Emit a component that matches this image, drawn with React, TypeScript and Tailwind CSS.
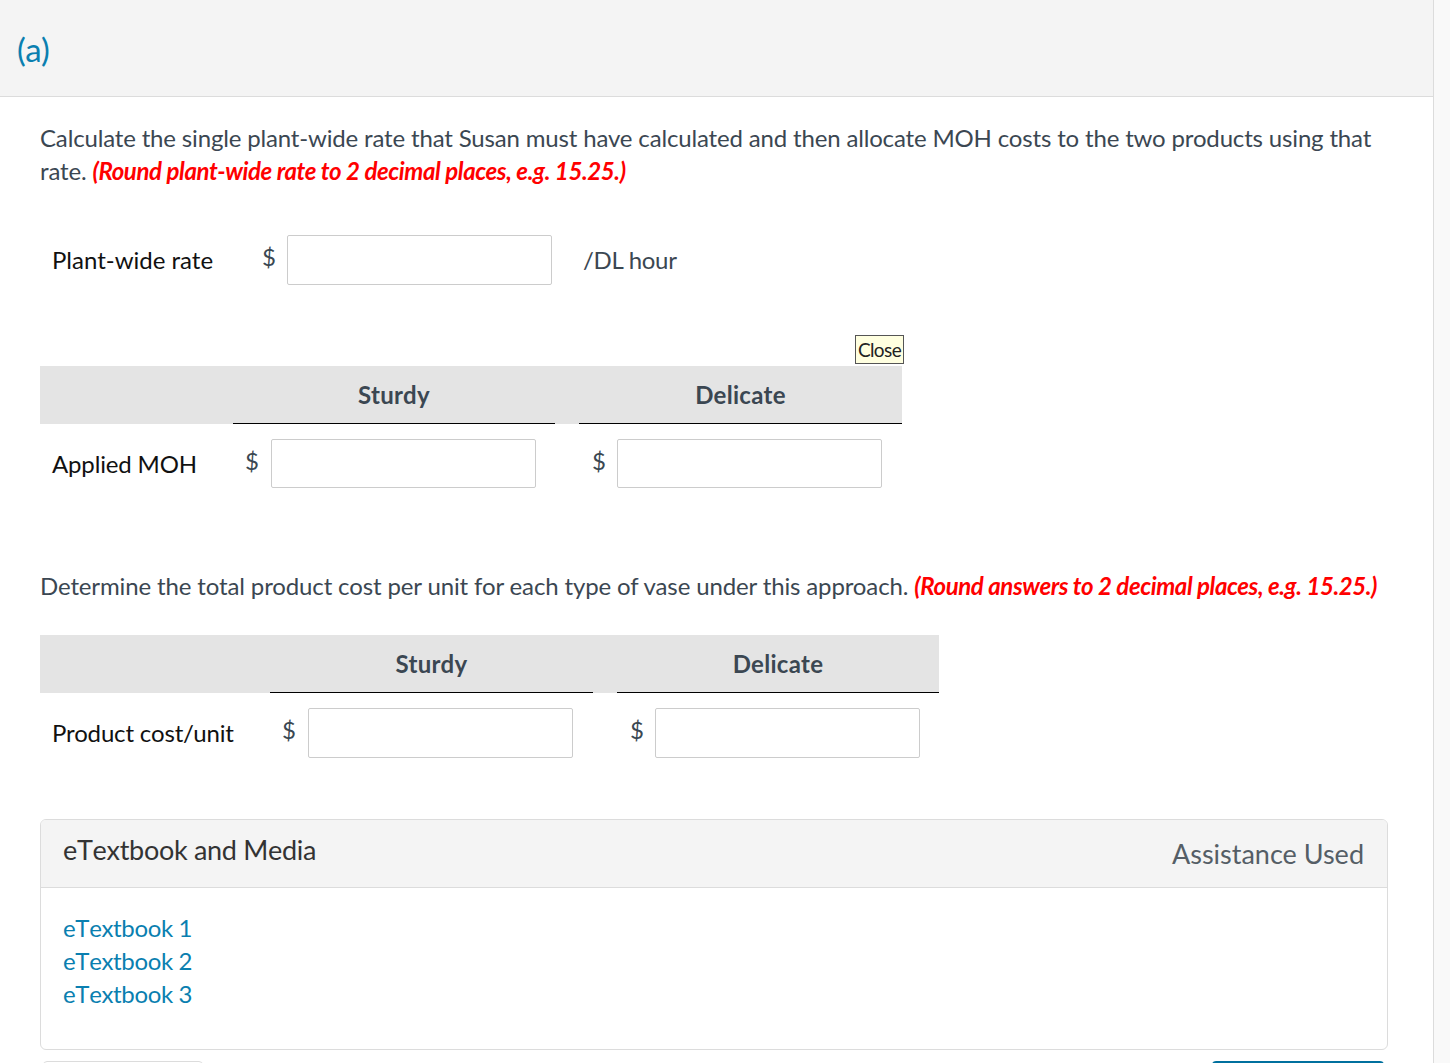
const Field = ({ height }: { height: string }) => (
  <div className={`w-[265px] ${height} bg-white border border-[#ccc] rounded-[2px] shrink-0`}></div>
);

interface CostTableProps {
  label: string;
  labelWidth: string;
  firstWidth: string;
  secondWidth: string;
  gapWidth: string;
  gapPad: string;
  fieldHeight: string;
}

function CostTable({ label, labelWidth, firstWidth, secondWidth, gapWidth, gapPad, fieldHeight }: CostTableProps) {
  return (
    <div className="w-fit">
      <div className="flex h-[58px] bg-[#e4e4e4] items-stretch">
        <div className={labelWidth}></div>
        <div className={`${firstWidth} border-b border-black flex items-center justify-center font-bold text-[#3b4752] text-[24px] tracking-[0.3px]`}>Sturdy</div>
        <div className="w-[24px]"></div>
        <div className={`${secondWidth} border-b border-black flex items-center justify-center font-bold text-[#3b4752] text-[24px] tracking-[0.3px]`}>Delicate</div>
      </div>
      <div className="flex mt-[15px] items-center">
        <div className={`${labelWidth} pl-[12px] text-[24px] tracking-[-0.15px] text-[#111] whitespace-nowrap`}>{label}</div>
        <div className="w-[38px] text-[24px] text-[#3b4752] pl-[12px] -mt-[6px]">$</div>
        <Field height={fieldHeight} />
        <div className={`${gapWidth} ${gapPad} text-[24px] text-[#3b4752] -mt-[6px]`}>$</div>
        <Field height={fieldHeight} />
      </div>
    </div>
  );
}

export default function App() {
  return (
    <div className="h-[1063px] overflow-hidden bg-[#f9f9f9] font-['Lato','Open_Sans',sans-serif]">
      <div className="w-[1434px] h-[1063px] bg-white border-r border-[#dcdcdc]">
        {/* Header */}
        <div className="h-[97px] bg-[#f4f4f4] border-b border-[#dcdcdc] pl-[17px] pt-[29px]">
          <span className="text-[33px] leading-[40px] text-[#0a7fb0]">(a)</span>
        </div>

        <div className="pl-[40px] pr-[46px]">
          <p className="mt-[24px] text-[24px] leading-[33px] tracking-[-0.16px] text-[#3b4752]">
            Calculate the single plant-wide rate that Susan must have calculated and then allocate MOH costs to the two products using that rate.{' '}
            <em className="font-bold text-[#ff0000] tracking-[-0.38px]">(Round plant-wide rate to 2 decimal places, e.g. 15.25.)</em>
          </p>

          {/* Plant-wide rate */}
          <div className="flex items-center mt-[48px]">
            <div className="w-[222px] pl-[12px] text-[24px] text-[#111]">Plant-wide rate</div>
            <div className="w-[25px] text-[24px] text-[#3b4752] -mt-[6px]">$</div>
            <Field height="h-[50px]" />
            <div className="ml-[31px] text-[24px] tracking-[-0.3px] text-[#3b4752]">/DL hour</div>
          </div>

          {/* First table */}
          <div className="w-[864px] flex justify-end mt-[50px] h-[31px]">
            <button className="w-[49px] h-[29px] bg-[#ffffe0] border border-[#555] text-[19px] leading-[28px] tracking-[-0.6px] text-[#222]">Close</button>
          </div>
          <CostTable
            label="Applied MOH"
            labelWidth="w-[193px]"
            firstWidth="w-[322px]"
            secondWidth="w-[323px]"
            gapWidth="w-[81px]"
            gapPad="pl-[56px]"
            fieldHeight="h-[49px]"
          />

          <p className="mt-[81px] text-[24px] leading-[33px] tracking-[-0.13px] text-[#3b4752] whitespace-nowrap">
            Determine the total product cost per unit for each type of vase under this approach.{' '}
            <em className="font-bold text-[#ff0000] tracking-[-0.4px]">(Round answers to 2 decimal places, e.g. 15.25.)</em>
          </p>

          {/* Second table */}
          <div className="mt-[33px]">
            <CostTable
              label="Product cost/unit"
              labelWidth="w-[230px]"
              firstWidth="w-[323px]"
              secondWidth="w-[322px]"
              gapWidth="w-[82px]"
              gapPad="pl-[57px]"
              fieldHeight="h-[50px]"
            />
          </div>

          {/* eTextbook panel */}
          <div className="mt-[61px] w-[1348px] h-[231px] border border-[#dcdcdc] rounded-[6px] overflow-hidden">
            <div className="h-[68px] bg-[#f4f4f4] border-b border-[#dcdcdc] flex justify-between pl-[22px] pr-[23px]">
              <div className="text-[27px] leading-[60px] tracking-[-0.3px] text-[#333] [font-kerning:none]">eTextbook and Media</div>
              <div className="text-[27px] leading-[68px] text-[#555e66]">Assistance Used</div>
            </div>
            <div className="pl-[22px] pt-[23px] text-[24px] leading-[33px] tracking-[-0.35px] text-[#0a7fb0] [font-kerning:none]">
              <div>eTextbook 1</div>
              <div>eTextbook 2</div>
              <div>eTextbook 3</div>
            </div>
          </div>

          {/* Buttons cut off by the bottom edge */}
          <div className="flex justify-between mt-[11px] pl-[3px] pr-[3px]">
            <div className="w-[160px] h-[20px] border border-[#dcdcdc] rounded-[4px] bg-white"></div>
            <div className="w-[172px] h-[20px] rounded-[4px] bg-[#00709e]"></div>
          </div>
        </div>
      </div>
    </div>
  );
}
